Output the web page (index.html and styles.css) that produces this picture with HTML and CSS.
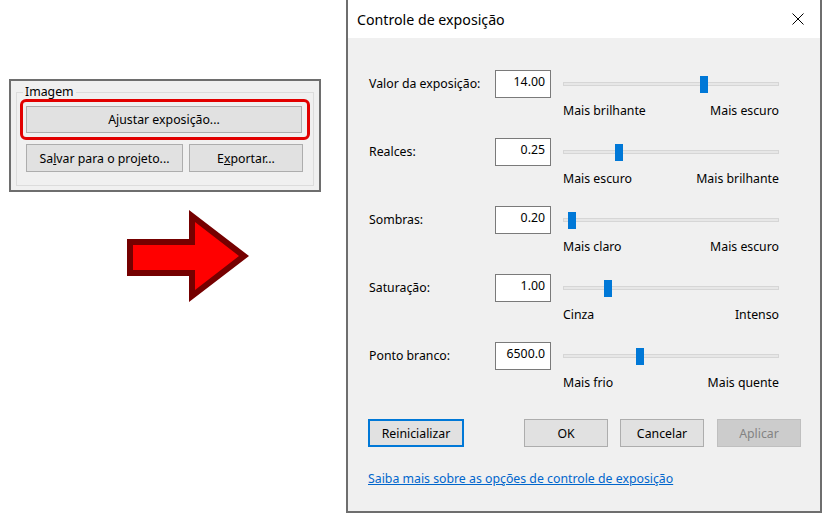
FILE: index.html
```html
<!DOCTYPE html>
<html lang="pt-BR">
<head>
    <meta charset="UTF-8">
    <title>Controle de exposição</title>
    <link rel="stylesheet" href="styles.css">
</head>
<body>
    <div class="screen">
        <div class="left">
            <div class="panel">
                <fieldset class="group">
                    <legend>Imagem</legend>
                    <div class="highlight">
                        <button class="btn btn-wide">A<u>j</u>ustar exposição...</button>
                    </div>
                    <div class="btn-row">
                        <button class="btn btn-save">Sa<u>l</u>var para o projeto...</button>
                        <button class="btn btn-export">E<u>x</u>portar...</button>
                    </div>
                </fieldset>
            </div>
            <svg class="arrow" width="123" height="93" viewBox="0 0 123 93">
                <polygon points="0,29 62,29 62,0 122,46 62,92 62,66 0,66" fill="#750000"/>
                <polygon points="6,35 68,35 68,12 112,46 68,80 68,60 6,60" fill="#ff0000"/>
            </svg>
        </div>

        <div class="dialog">
            <div class="titlebar">
                <span class="title">Controle de exposição</span>
                <svg class="close" width="12" height="12" viewBox="0 0 12 12">
                    <path d="M0.5 0.5 L11.5 11.5 M11.5 0.5 L0.5 11.5" stroke="#000" stroke-width="1"/>
                </svg>
            </div>
            <div class="dialog-body">
                <div class="row">
                    <label class="row-label">Valor da exposição:</label>
                    <div class="value">14.00</div>
                    <div class="slider">
                        <div class="track-wrap"><div class="track"></div><div class="thumb" style="left: 137px"></div></div>
                        <div class="ends"><span>Mais brilhante</span><span>Mais escuro</span></div>
                    </div>
                </div>
                <div class="row">
                    <label class="row-label">Realces:</label>
                    <div class="value">0.25</div>
                    <div class="slider">
                        <div class="track-wrap"><div class="track"></div><div class="thumb" style="left: 52px"></div></div>
                        <div class="ends"><span>Mais escuro</span><span>Mais brilhante</span></div>
                    </div>
                </div>
                <div class="row">
                    <label class="row-label">Sombras:</label>
                    <div class="value">0.20</div>
                    <div class="slider">
                        <div class="track-wrap"><div class="track"></div><div class="thumb" style="left: 5px"></div></div>
                        <div class="ends"><span>Mais claro</span><span>Mais escuro</span></div>
                    </div>
                </div>
                <div class="row">
                    <label class="row-label">Saturação:</label>
                    <div class="value">1.00</div>
                    <div class="slider">
                        <div class="track-wrap"><div class="track"></div><div class="thumb" style="left: 41px"></div></div>
                        <div class="ends"><span>Cinza</span><span>Intenso</span></div>
                    </div>
                </div>
                <div class="row">
                    <label class="row-label">Ponto branco:</label>
                    <div class="value">6500.0</div>
                    <div class="slider">
                        <div class="track-wrap"><div class="track"></div><div class="thumb" style="left: 73px"></div></div>
                        <div class="ends"><span>Mais frio</span><span>Mais quente</span></div>
                    </div>
                </div>

                <div class="actions">
                    <button class="btn btn-reset">Reinicializar</button>
                    <button class="btn btn-action btn-ok">OK</button>
                    <button class="btn btn-action">Cancelar</button>
                    <button class="btn btn-action btn-apply" disabled>Aplicar</button>
                </div>

                <a class="help" href="#">Saiba mais sobre as opções de controle de exposição</a>
            </div>
        </div>
    </div>
</body>
</html>
```

FILE: styles.css
```css
:root {
    --face: #f0f0f0;
    --frame: #6e6e6e;
    --button: #e1e1e1;
    --button-border: #adadad;
    --accent: #0078d7;
    --link: #0066cc;
}

body {
    margin: 0;
    background: #ffffff;
    color: #000000;
    font-family: "Noto Sans", sans-serif;
    font-size: 12.3px;
}

.screen {
    display: flex;
    height: 513px;
}

/* lado esquerdo */

.left {
    width: 346px;
}

.panel {
    box-sizing: border-box;
    width: 312px;
    height: 113px;
    margin: 79px 0 0 9px;
    border: 2px solid var(--frame);
    background: var(--face);
}

.group {
    margin: 4px 5px 0 5px;
    padding: 0 3px 13px 3px;
    border: 1px solid #dcdcdc;
}

.group legend {
    margin-left: 3px;
    padding: 0 2px;
    line-height: 14px;
}

.highlight {
    padding: 4px 5px 4px 3px;
    border: 3px solid #e20000;
    border-radius: 6px;
}

.btn {
    box-sizing: border-box;
    height: 28px;
    padding: 0;
    border: 1px solid var(--button-border);
    background: var(--button);
    color: #000000;
    font-family: inherit;
    font-size: 12.3px;
}

.btn-wide {
    display: block;
    width: 100%;
    height: 27px;
}

.btn-row {
    display: flex;
    gap: 6px;
    margin: 4px 0 0 6px;
}

.btn-save {
    width: 157px;
}

.btn-export {
    width: 114px;
}

.arrow {
    display: block;
    margin: 18px 0 0 127px;
}

/* dialogo */

.dialog {
    box-sizing: border-box;
    width: 476px;
    height: 513px;
    border: 2px solid var(--frame);
    border-top: none;
    background: var(--face);
}

.titlebar {
    display: flex;
    align-items: center;
    justify-content: space-between;
    height: 38px;
    padding: 0 16px 0 9px;
    background: #ffffff;
}

.title {
    font-size: 14.2px;
}

.close {
    display: block;
}

.dialog-body {
    padding: 32px 19px 0 20px;
}

.row {
    display: grid;
    grid-template-columns: 127px 56px 228px;
    height: 68px;
}

.row-label {
    line-height: 28px;
    padding-left: 1px;
}

.value {
    box-sizing: border-box;
    height: 28px;
    padding: 3px 5px;
    border: 1px solid #7a7a7a;
    background: #ffffff;
    text-align: right;
    line-height: 16px;
}

.slider {
    padding-left: 12px;
}

.track-wrap {
    position: relative;
    height: 28px;
}

.track {
    position: absolute;
    left: 0;
    right: 0;
    top: 12px;
    height: 2px;
    border: 1px solid #d6d6d6;
    background: #e7e7e7;
}

.thumb {
    position: absolute;
    top: 6px;
    width: 8px;
    height: 17px;
    background: var(--accent);
}

.ends {
    display: flex;
    justify-content: space-between;
    margin-top: 5px;
    line-height: 16px;
}

.actions {
    display: flex;
    gap: 12px;
    margin-top: 9px;
}

.btn-reset {
    width: 96px;
    border: 2px solid var(--accent);
}

.btn-action {
    width: 84px;
}

.btn-ok {
    margin-left: 48px;
}

.btn-apply {
    margin-left: 1px;
    border-color: #bfbfbf;
    background: #cccccc;
    color: #838383;
}

.help {
    display: inline-block;
    margin-top: 24px;
    line-height: 16px;
    color: var(--link);
}
```
